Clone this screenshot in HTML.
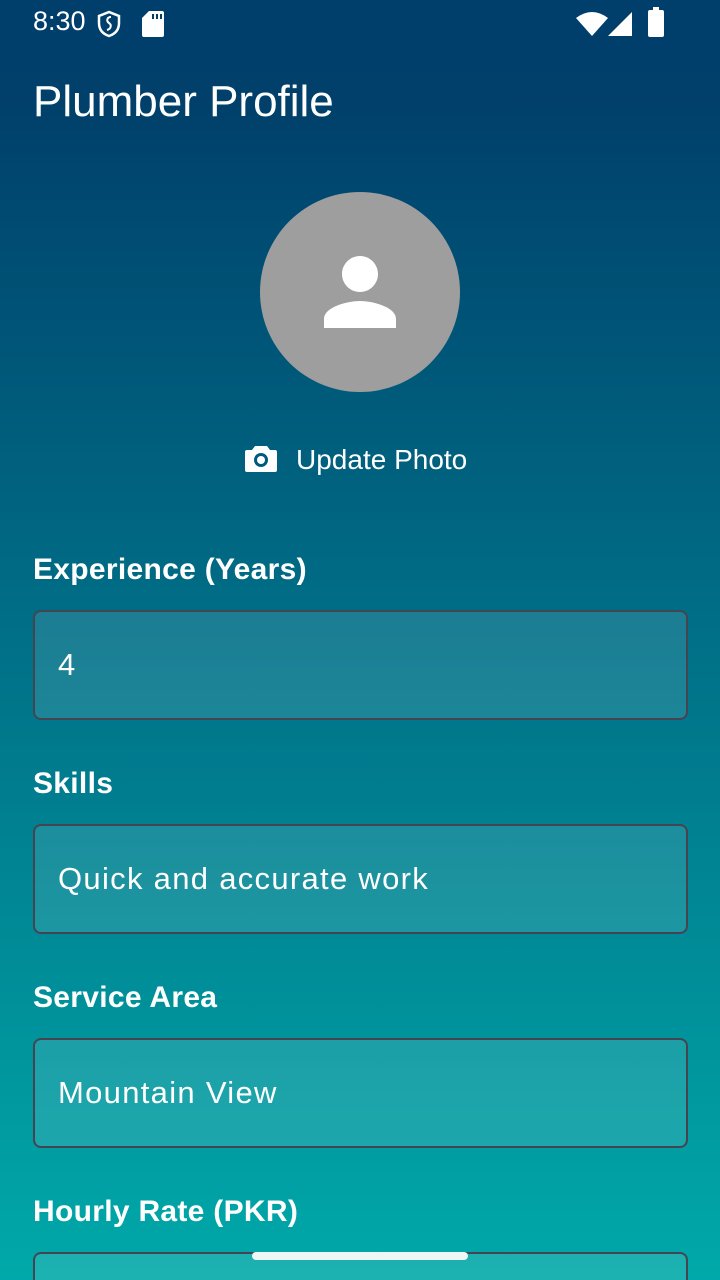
<!DOCTYPE html>
<html style="width:720px;height:1280px;overflow:hidden"><head><meta charset="utf-8"><style>
*{margin:0;padding:0;box-sizing:border-box}
body{width:720px;height:1280px;overflow:hidden;font-family:"Liberation Sans",Roboto,sans-serif;color:#fff;background:linear-gradient(180deg,#003e6b 0%,#00406b 8%,#00a9a9 100%);position:relative}
.abs{position:absolute}
.lbl{position:absolute;left:33px;font-size:30px;font-weight:bold;letter-spacing:0.3px}
.fld{position:absolute;left:33px;width:655px;height:110px;border:2px solid #454552;border-radius:8px;background:rgba(255,255,255,0.11)}
.fld span{position:absolute;left:23px;top:35px;font-size:31px;letter-spacing:1.3px}
</style></head><body>
<div class="abs" style="left:33px;top:6px;font-size:27px">8:30</div>
<svg class="abs" style="left:96px;top:10px" width="26" height="28" viewBox="0 0 26 28"><path d="M13 2L3 6v7c0 7 4 11 10 13 6-2 10-6 10-13V6z" fill="none" stroke="#fff" stroke-width="2.5"/><path d="M15 7c-4 0-5 4-2 6s2 6-2 7" fill="none" stroke="#fff" stroke-width="2"/></svg>
<svg class="abs" style="left:142px;top:11px" width="22" height="26" viewBox="0 0 22 26"><path d="M7 0h13a2 2 0 012 2v22a2 2 0 01-2 2H2a2 2 0 01-2-2V7z" fill="#fff"/><rect x="10" y="3" width="2" height="5" fill="#00406b"/><rect x="14" y="3" width="2" height="5" fill="#00406b"/><rect x="18" y="3" width="2" height="5" fill="#00406b"/></svg>
<svg class="abs" style="left:576px;top:12px" width="32" height="24" viewBox="0 0 32 24"><path d="M0 6Q16-6 32 6L16 24z" fill="#fff"/></svg>
<svg class="abs" style="left:608px;top:12px" width="26" height="24" viewBox="0 0 26 24"><path d="M24 0V24H0z" fill="#fff"/></svg>
<div class="abs" style="left:648px;top:10px;width:16px;height:27px;background:#fff;border-radius:2px"></div>
<div class="abs" style="left:653px;top:7px;width:6px;height:4px;background:#fff"></div>
<div class="abs" style="left:33px;top:77px;font-size:44px">Plumber Profile</div>
<div class="abs" style="left:260px;top:192px;width:200px;height:200px;border-radius:50%;background:#9e9e9e"></div>
<svg class="abs" style="left:306px;top:238px" width="108" height="108" viewBox="0 0 24 24"><path fill="#fff" d="M12 12c2.2 0 4-1.8 4-4s-1.8-4-4-4-4 1.8-4 4 1.8 4 4 4zm0 2c-2.7 0-8 1.3-8 4v2h16v-2c0-2.7-5.3-4-8-4z"/></svg>
<svg class="abs" style="left:245px;top:444px" width="32" height="30" viewBox="0 0 32 30"><path d="M10 2h12l3 4h5a2 2 0 012 2v18a2 2 0 01-2 2H2a2 2 0 01-2-2V8a2 2 0 012-2h5z" fill="#fff"/><circle cx="16" cy="16" r="7" fill="#005a80"/><circle cx="16" cy="16" r="4" fill="#fff"/></svg>
<div class="abs" style="left:296px;top:444px;font-size:28px;font-weight:500">Update Photo</div>
<div class="lbl" style="top:553px">Experience (Years)</div>
<div class="fld" style="top:610px"><span>4</span></div>
<div class="lbl" style="top:767px">Skills</div>
<div class="fld" style="top:824px"><span>Quick and accurate work</span></div>
<div class="lbl" style="top:981px">Service Area</div>
<div class="fld" style="top:1038px"><span>Mountain View</span></div>
<div class="lbl" style="top:1195px">Hourly Rate (PKR)</div>
<div class="fld" style="top:1252px;height:28px;border-bottom:none;border-radius:8px 8px 0 0"></div>
<div class="abs" style="left:252px;top:1252px;width:216px;height:8px;border-radius:4px;background:#eef6f6"></div>
</body></html>
